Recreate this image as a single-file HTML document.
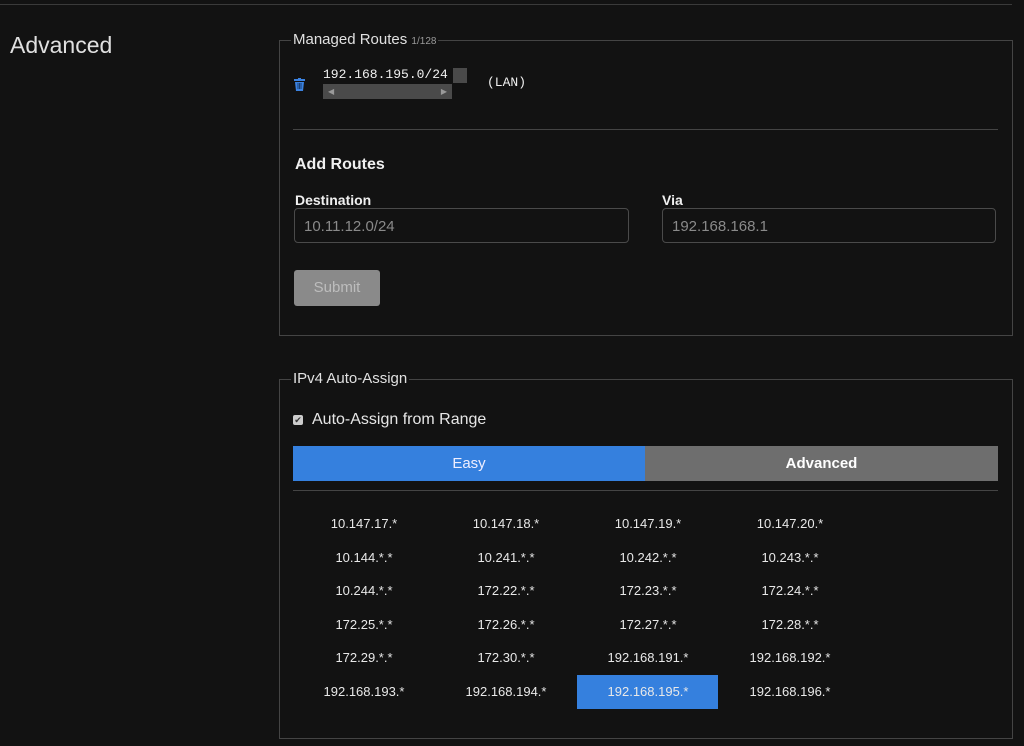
<!DOCTYPE html><html><head><style>
body{margin:0;width:1024px;height:746px;background:#121212;color:#e6e6e6;font-family:"Liberation Sans",sans-serif;position:relative;overflow:hidden}
.a{position:absolute}
.fs{position:absolute;border:1px solid #444;left:279px;width:732px}
.lg{position:absolute;background:#121212;padding:0 2px;font-size:15px;color:#e0e0e0}
.in{position:absolute;height:35px;border:1px solid #4a4a4a;border-radius:4px;box-sizing:border-box;padding:9px 9px;font-size:15px;color:#8a8a8a}
.c{position:absolute;width:142px;height:34px;line-height:34px;text-align:center;font-size:13px;color:#e8e8e8}
</style></head><body>
<div class="a" style="left:0;top:4px;width:1012px;height:1px;background:#3a3a3a"></div>
<div class="a" style="left:10px;top:32px;font-size:23px;color:#e0e0e0">Advanced</div>

<div class="fs" style="top:40px;height:294px"></div>
<div class="lg" style="left:291px;top:31px">Managed Routes <span style="font-size:10px;color:#999">1/128</span></div>
<svg class="a" style="left:294px;top:78px" width="11" height="13" viewBox="0 0 11 13"><rect x="0" y="1" width="11" height="2" fill="#3b82e0"/><rect x="4" y="0" width="3" height="2" fill="#3b82e0"/><path d="M1 4h9l-1 9H2z" fill="#3b82e0"/><path d="M4 5v6M5.5 5v6M7 5v6" stroke="#12305a" stroke-width=".8"/></svg>
<div class="a" style="left:323px;top:67px;font-family:'Liberation Mono',monospace;font-size:13px;color:#f0f0f0">192.168.195.0/24</div>
<div class="a" style="left:453px;top:68px;width:14px;height:15px;background:#4a4a4a"></div>
<div class="a" style="left:323px;top:84px;width:129px;height:15px;background:#4a4a4a;font-size:8px;color:#999;line-height:15px"><span style="margin-left:5px">◀</span><span style="float:right;margin-right:5px">▶</span></div>
<div class="a" style="left:487px;top:75px;font-family:'Liberation Mono',monospace;font-size:13px;color:#f0f0f0">(LAN)</div>
<div class="a" style="left:293px;top:129px;width:705px;height:1px;background:#444"></div>
<div class="a" style="left:295px;top:156px;font-size:16px;font-weight:bold;color:#f0f0f0">Add Routes</div>
<div class="a" style="left:295px;top:192px;font-size:14px;font-weight:bold;color:#f0f0f0">Destination</div>
<div class="a" style="left:662px;top:192px;font-size:14px;font-weight:bold;color:#f0f0f0">Via</div>
<div class="in" style="left:294px;top:208px;width:335px">10.11.12.0/24</div>
<div class="in" style="left:662px;top:208px;width:334px">192.168.168.1</div>
<div class="a" style="left:294px;top:270px;width:86px;height:36px;background:#8a8a8a;border-radius:3px;color:#bdbdbd;font-size:15px;line-height:36px;text-align:center">Submit</div>

<div class="fs" style="top:379px;height:358px"></div>
<div class="lg" style="left:291px;top:370px">IPv4 Auto-Assign</div>
<div class="a" style="left:293px;top:415px;width:10px;height:10px;background:#ccc;border-radius:2px;font-size:9px;color:#333;line-height:10px;text-align:center">✔</div>
<div class="a" style="left:312px;top:411px;font-size:16px;color:#e6e6e6">Auto-Assign from Range</div>
<div class="a" style="left:293px;top:446px;width:352px;height:35px;background:#3580de;color:#eef;text-align:center;line-height:35px;font-size:15px">Easy</div>
<div class="a" style="left:645px;top:446px;width:353px;height:35px;background:#6e6e6e;color:#fff;text-align:center;line-height:35px;font-size:15px;font-weight:bold">Advanced</div>
<div class="a" style="left:293px;top:490px;width:705px;height:1px;background:#444"></div>
<div class="a" style="left:577px;top:675px;width:141px;height:34px;background:#3580de"></div>
<div class="c" style="left:293px;top:507px">10.147.17.*</div><div class="c" style="left:435px;top:507px">10.147.18.*</div><div class="c" style="left:577px;top:507px">10.147.19.*</div><div class="c" style="left:719px;top:507px">10.147.20.*</div>
<div class="c" style="left:293px;top:541px">10.144.*.*</div><div class="c" style="left:435px;top:541px">10.241.*.*</div><div class="c" style="left:577px;top:541px">10.242.*.*</div><div class="c" style="left:719px;top:541px">10.243.*.*</div>
<div class="c" style="left:293px;top:574px">10.244.*.*</div><div class="c" style="left:435px;top:574px">172.22.*.*</div><div class="c" style="left:577px;top:574px">172.23.*.*</div><div class="c" style="left:719px;top:574px">172.24.*.*</div>
<div class="c" style="left:293px;top:608px">172.25.*.*</div><div class="c" style="left:435px;top:608px">172.26.*.*</div><div class="c" style="left:577px;top:608px">172.27.*.*</div><div class="c" style="left:719px;top:608px">172.28.*.*</div>
<div class="c" style="left:293px;top:641px">172.29.*.*</div><div class="c" style="left:435px;top:641px">172.30.*.*</div><div class="c" style="left:577px;top:641px">192.168.191.*</div><div class="c" style="left:719px;top:641px">192.168.192.*</div>
<div class="c" style="left:293px;top:675px">192.168.193.*</div><div class="c" style="left:435px;top:675px">192.168.194.*</div><div class="c" style="left:577px;top:675px">192.168.195.*</div><div class="c" style="left:719px;top:675px">192.168.196.*</div>
</body></html>
